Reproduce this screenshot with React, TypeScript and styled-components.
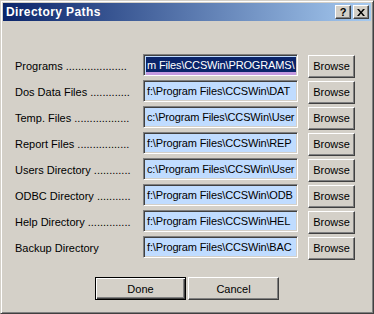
import React, { ReactElement } from 'react';
import styled, { createGlobalStyle } from 'styled-components';

const PATHS = [
  { label: 'Programs', dots: 20, value: 'm Files\\CCSWin\\PROGRAMS\\', selected: true },
  { label: 'Dos Data Files', dots: 13, value: 'f:\\Program Files\\CCSWin\\DAT' },
  { label: 'Temp. Files', dots: 18, value: 'c:\\Program Files\\CCSWin\\User' },
  { label: 'Report Files', dots: 17, value: 'f:\\Program Files\\CCSWin\\REP' },
  { label: 'Users Directory', dots: 12, value: 'c:\\Program Files\\CCSWin\\User' },
  { label: 'ODBC Directory', dots: 11, value: 'f:\\Program Files\\CCSWin\\ODB' },
  { label: 'Help Directory', dots: 14, value: 'f:\\Program Files\\CCSWin\\HEL' },
  { label: 'Backup Directory', dots: 0, value: 'f:\\Program Files\\CCSWin\\BAC' },
];

function App(): ReactElement {
  return (
    <>
      <GlobalStyle />
      <Window>
        <TitleBar>
          <Title>Directory Paths</Title>
          <TitleButtons>
            <CaptionButton>?</CaptionButton>
            <CaptionButton>
              <svg width="8" height="7" viewBox="0 0 8 7">
                <path d="M0 0h2l2 2.5L6 0h2L5 3.5 8 7H6L4 4.5 2 7H0l3-3.5z" fill="#000" />
              </svg>
            </CaptionButton>
          </TitleButtons>
        </TitleBar>
        <Body>
          <PathGrid>
            {PATHS.map(({ label, dots, value, selected }) => (
              <React.Fragment key={label}>
                <Label>
                  {label}
                  {dots > 0 && ' ' + '.'.repeat(dots)}
                </Label>
                <Field>
                  {selected ? <Selection>{value}</Selection> : value}
                </Field>
                <BrowseButton>Browse</BrowseButton>
              </React.Fragment>
            ))}
          </PathGrid>
          <Footer>
            <DialogButton isDefault>Done</DialogButton>
            <DialogButton>Cancel</DialogButton>
          </Footer>
        </Body>
      </Window>
    </>
  );
}

const GlobalStyle = createGlobalStyle`
  html, body {
    margin: 0;
    padding: 0;
    background: #d4d0c8;
  }
  body {
    font-family: 'Liberation Sans', Arial, sans-serif;
    font-size: 11px;
  }
`;

const Window = styled.div`
  box-sizing: border-box;
  width: 374px;
  height: 314px;
  background: #d4d0c8;
  border: 1px solid;
  border-color: #d4d0c8 #404040 #404040 #d4d0c8;
  box-shadow: inset 1px 1px 0 #fff, inset -1px -1px 0 #808080;
  padding: 2px;
  display: flex;
  flex-direction: column;
`;

const TitleBar = styled.div`
  height: 18px;
  display: flex;
  align-items: center;
  justify-content: space-between;
  padding: 0 2px 0 3px;
  background: linear-gradient(to right, #0a246a, #a6caf0);
`;

const Title = styled.span`
  color: #fff;
  font-weight: bold;
  font-size: 12px;
  letter-spacing: 0.4px;
`;

const TitleButtons = styled.div`
  display: flex;
  gap: 2px;
`;

const CaptionButton = styled.div`
  box-sizing: border-box;
  width: 16px;
  height: 14px;
  display: flex;
  align-items: center;
  justify-content: center;
  background: #d4d0c8;
  border: 1px solid;
  border-color: #fff #404040 #404040 #fff;
  box-shadow: inset -1px -1px 0 #808080;
  font-weight: bold;
  font-size: 11px;
  line-height: 1;
  color: #000;
`;

const Body = styled.div`
  flex: 1;
  display: flex;
  flex-direction: column;
  padding: 33px 0 0 12px;
`;

const PathGrid = styled.div`
  display: grid;
  grid-template-columns: 118px 155px 47px;
  grid-auto-rows: 22px;
  column-gap: 10px;
  row-gap: 4px;
  align-items: center;
`;

const Label = styled.div`
  white-space: nowrap;
  color: #000;
  padding-top: 1px;
`;

const Field = styled.div`
  box-sizing: border-box;
  height: 22px;
  border: 1px solid;
  border-color: #808080 #fff #fff #808080;
  box-shadow: inset 1px 1px 0 #404040, inset -1px -1px 0 #d4d0c8;
  background: #c0dcff;
  padding: 3px 2px 0 3px;
  white-space: nowrap;
  overflow: hidden;
  color: #000;
  line-height: 14px;
  letter-spacing: -0.15px;
`;

const Selection = styled.div`
  margin: -1px -1px 0 -1px;
  padding: 1px 1px 0 1px;
  height: 14px;
  background: #0a246a;
  color: #fff;
  box-shadow: 0 3px 0 #c49ae0;
`;

const BrowseButton = styled.div`
  box-sizing: border-box;
  height: 23px;
  margin-top: 2px;
  display: flex;
  align-items: center;
  justify-content: center;
  background: #d4d0c8;
  border: 1px solid;
  border-color: #fff #404040 #404040 #fff;
  box-shadow: inset -1px -1px 0 #808080;
  color: #000;
`;

const Footer = styled.div`
  display: flex;
  justify-content: center;
  gap: 2px;
  margin-top: 19px;
  padding-right: 12px;
`;

const DialogButton = styled.div<{ isDefault?: boolean }>`
  box-sizing: border-box;
  width: 91px;
  height: 23px;
  display: flex;
  align-items: center;
  justify-content: center;
  background: #d4d0c8;
  color: #000;
  border: 1px solid ${({ isDefault }) => (isDefault ? '#000' : '#fff')};
  ${({ isDefault }) =>
    isDefault
      ? 'box-shadow: inset 1px 1px 0 #fff, inset -1px -1px 0 #404040, inset -2px -2px 0 #808080;'
      : 'border-color: #fff #404040 #404040 #fff; box-shadow: inset -1px -1px 0 #808080;'}
`;

export default App;
